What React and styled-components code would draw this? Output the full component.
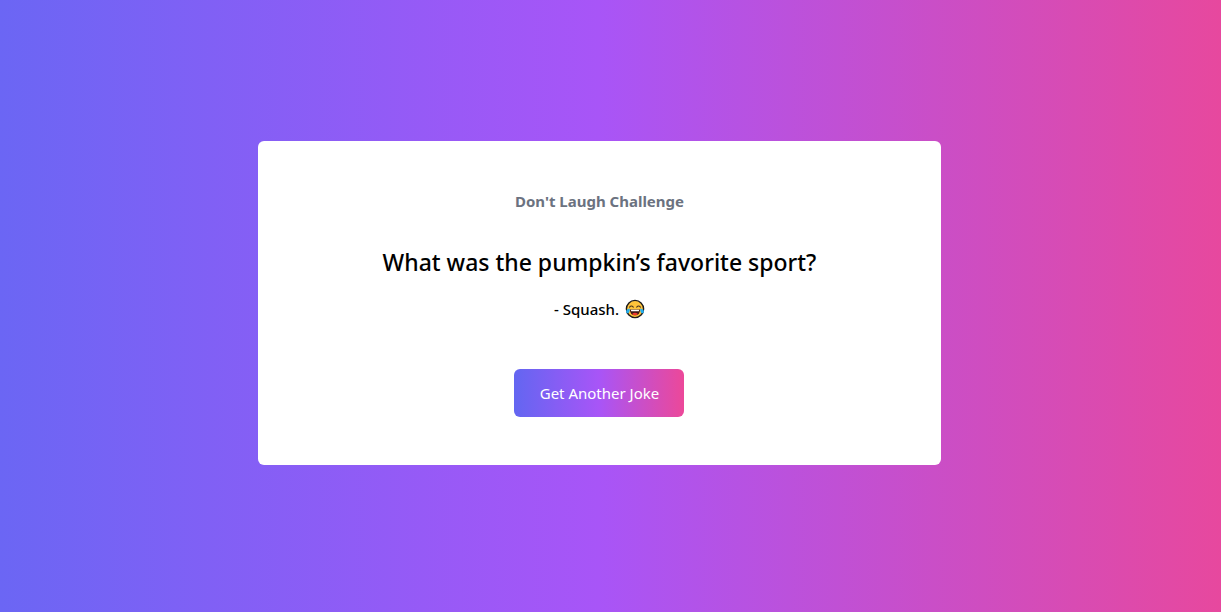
import React from "react";
import styled, { createGlobalStyle } from "styled-components";

const GlobalStyle = createGlobalStyle`
  *, *::before, *::after { box-sizing: border-box; }
  body { margin: 0; }
`;

const Page = styled.main`
  display: flex;
  align-items: center;
  justify-content: center;
  min-height: 100vh;
  padding: 0 22px 6px 0;
  background: linear-gradient(to right, #6b66f4, #a855f7 49%, #e7489e);
  font-family: "Noto Sans", "Open Sans", sans-serif;
  color: #000;
`;

const Card = styled.section`
  display: flex;
  flex-direction: column;
  align-items: center;
  width: 57%;
  padding: 48px;
  border-radius: 6px;
  background: #fff;
  text-align: center;
`;

const Title = styled.h1`
  margin: 0;
  font-size: 15px;
  font-weight: 700;
  line-height: 24px;
  color: #6b7280;
`;

const Question = styled.h2`
  margin: 31px 0 0;
  font-size: 23px;
  font-weight: 500;
  line-height: 36px;
`;

const Answer = styled.p`
  display: flex;
  align-items: center;
  gap: 6px;
  margin: 17px 0 0;
  font-size: 15px;
  font-weight: 500;
  line-height: 24px;
`;

const Emoji = styled.svg`
  width: 20px;
  height: 20px;
`;

const JokeButton = styled.button`
  min-width: 170px;
  height: 48px;
  margin-top: 48px;
  padding: 0 24px;
  border: 0;
  border-radius: 6px;
  background: linear-gradient(to right, #6366f1, #a855f7, #ec4899);
  font: 400 15px/24px "Noto Sans", "Open Sans", sans-serif;
  color: #fff;
  cursor: pointer;
`;

function LaughingFace() {
  return (
    <Emoji viewBox="0 0 20 20" role="img" aria-label="Face with tears of joy">
      <circle cx="10" cy="10" r="8.6" fill="#ffc43b" stroke="#1c1a1a" strokeWidth="1.4" />
      <path d="M4.6 8.1Q6.4 5.8 8.3 8.1M11.7 8.1Q13.6 5.8 15.4 8.1" fill="none" stroke="#4a3520" strokeWidth="1.1" strokeLinecap="round" />
      <path d="M5 10.5H15C15 14.5 13 16.3 10 16.3S5 14.5 5 10.5Z" fill="#3b1717" />
      <path d="M5.8 10.7H14.2L13.8 12.3H6.2Z" fill="#fff" />
      <path d="M7 15Q10 12.4 13 15Q11.7 16.2 10 16.2T7 15Z" fill="#f03a2f" />
      <path d="M4.7 9.5C2.2 9.9.8 11.5 1.1 13.1C1.4 14.6 3.4 14.8 4.2 13.3C4.8 12.1 4.8 10.7 4.7 9.5ZM15.3 9.5C17.8 9.9 19.2 11.5 18.9 13.1C18.6 14.6 16.6 14.8 15.8 13.3C15.2 12.1 15.2 10.7 15.3 9.5Z" fill="#24aef0" />
    </Emoji>
  );
}

export default function App() {
  return (
    <>
      <GlobalStyle />
      <Page>
        <Card>
          <Title>Don't Laugh Challenge</Title>
          <Question>What was the pumpkin’s favorite sport?</Question>
          <Answer>
            - Squash.
            <LaughingFace />
          </Answer>
          <JokeButton type="button">Get Another Joke</JokeButton>
        </Card>
      </Page>
    </>
  );
}
